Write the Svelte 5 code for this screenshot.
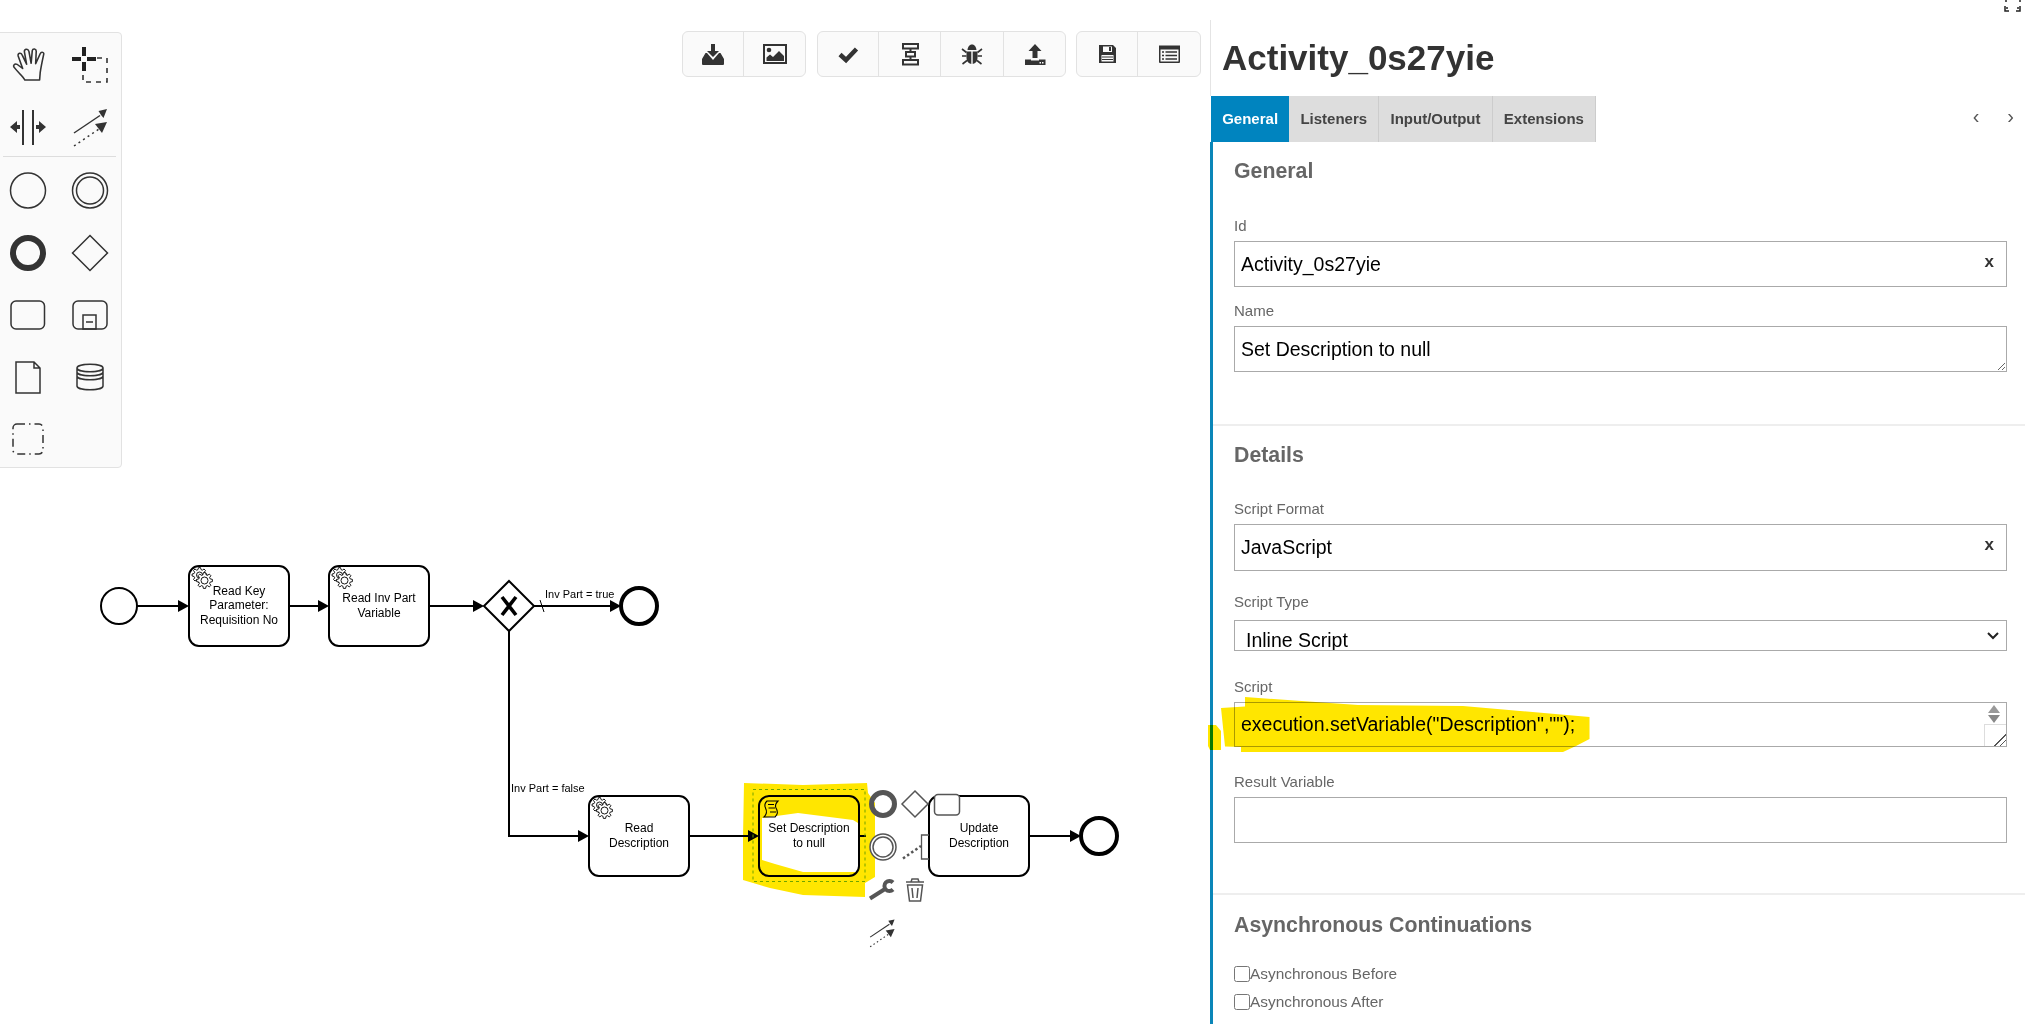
<script>
  const tasks = [
    { x: 189, lines: [['Read Key', 590.5], ['Parameter:', 605], ['Requisition No', 619.5]] },
    { x: 329, lines: [['Read Inv Part', 597.5], ['Variable', 612.5]] }
  ];
  function gear(cx, cy, r, n = 8) {
    const pts = [];
    for (let i = 0; i < n; i++) {
      const a = (i / n) * Math.PI * 2;
      const w = (Math.PI / n) * 0.5;
      [[r * 0.74, -w * 1.35], [r, -w * 0.7], [r, w * 0.7], [r * 0.74, w * 1.35]].forEach(([rad, d]) => {
        pts.push(`${(cx + rad * Math.cos(a + d)).toFixed(1)} ${(cy + rad * Math.sin(a + d)).toFixed(1)}`);
      });
    }
    return 'M' + pts.join('L') + 'Z';
  }
  const flows = [
    'M137 606H180', 'M289 606H320', 'M429 606H475', 'M534 606H622',
    'M509 631V836H580', 'M689 836H750', 'M1029 836H1072'
  ];
  const heads = [[189, 606], [329, 606], [484, 606], [621, 606], [589, 836], [759, 836], [1081, 836]];
</script>

{#snippet connectIcon()}
  <path class="ink" d="M-16 11 L11 -7 L8.5 -11 L17 -13 L13.5 -4 L11 -7Z" />
  <path class="thinline" d="M-16 11 L10 -6.5" />
  <path class="dotline" d="M-16 24 L9 7" />
  <path class="ink" d="M5 2 L17 0 L12 11Z" />
{/snippet}

{#snippet gears(x, y)}
  <path class="gear" d={gear(x + 10, y + 10, 7.5)} />
  <circle class="gearhole" cx={x + 10} cy={y + 10} r="3" />
  <path class="gear" d={gear(x + 15, y + 15.5, 8)} />
  <circle class="gearhole" cx={x + 15} cy={y + 15.5} r="3.5" />
{/snippet}

<div class="page">
  <main class="canvas">
    <svg class="diagram" width="1210" height="1024" viewBox="0 0 1210 1024">
      <circle class="shape" cx="119" cy="606" r="18" />
      {#each tasks as t}
        <rect class="shape" x={t.x} y="566" width="100" height="80" rx="10" />
        {@render gears(t.x + 0.5, 565)}
        {#each t.lines as [txt, y]}
          <text class="tasktext" x={t.x + 50} y={y + 4}>{txt}</text>
        {/each}
      {/each}

      {#each flows as d}
        <path class="flow" {d} />
      {/each}
      {#each heads as [x, y]}
        <polygon class="head" points="{x - 11},{y - 6} {x},{y} {x - 11},{y + 6}" />
      {/each}
      <path class="thinline black" d="M540 600 L544 612" />

      <polygon class="shape" points="509,581 534,606 509,631 484,606" />
      <path class="xmark" d="M502 597 L516 615 M516 597 L502 615" />
      <circle class="shape end" cx="639" cy="606" r="18" />
      <text class="label" x="545" y="598">Inv Part = true</text>
      <text class="label" x="511" y="792">Inv Part = false</text>

      <rect class="shape" x="589" y="796" width="100" height="80" rx="10" />
      {@render gears(589 + 0.5, 795)}
      <text class="tasktext" x="639" y="832">Read</text>
      <text class="tasktext" x="639" y="847">Description</text>

      <rect class="shape" x="759" y="796" width="100" height="80" rx="10" />
      <path class="script" d="M767 801 H778 C775 804 775 806 776 808 C778 811 778 814 775 817 H764 C767 814 767 811 765.5 808 C764 805 765 803 767 801Z M768 804.5H774 M768.5 808H775 M770 812H776" />
      <text class="tasktext" x="809" y="832">Set Description</text>
      <text class="tasktext" x="809" y="847">to null</text>
      <path class="flow" d="M859 836H866" />
      <rect class="select" x="753" y="789.5" width="112" height="92" />

      <rect class="shape" x="929" y="796" width="100" height="80" rx="10" />
      <circle class="shape end" cx="1099" cy="836" r="18" />
      <text class="tasktext" x="979" y="832">Update</text>
      <text class="tasktext" x="979" y="847">Description</text>

      <path class="highlight" fill-rule="evenodd" d="M744 783 L803 785 L867 783 L868 793 L875 803 V877 L865 883 V897 L803 895 L770 888 L743 880 L743 837Z M762 818 L798 813 L853 820 L858 823 V872 H803 L775 864 L762 860Z" />

      <circle class="pad thick" cx="883" cy="804" r="11.5" />
      <polygon class="pad" points="915,791 928,804 915,817 902,804" />
      <rect class="pad" x="934.5" y="794.5" width="25" height="20.5" rx="3.5" />
      <circle class="pad" cx="883" cy="847" r="13" />
      <circle class="pad" cx="883" cy="847" r="10" />
      <path class="paddots" d="M903 858.5 L921 846" />
      <path class="padthin" d="M929 835H921.5V859H929" />
      <path class="wrench" d="M870 898.500 L885 889 M893 882.500 A 5 5 0 1 0 893 889.500" />
      <g class="trash">
        <path d="M906 882H924 M911 882L912 879H918L919 882" />
        <path d="M907.5 885L909.5 901H920.500L922.5 885Z" />
        <path d="M912 888L913 898 M918 888L917 898" />
      </g>
      <g class="connect-small" transform="translate(882 929) scale(0.74)">
        {@render connectIcon()}
      </g>
    </svg>

    <aside class="palette">
      <div class="tool"><svg viewBox="-31 -31 62 62"><path class="hand" transform="translate(-15.5 -16.500) scale(1.13 1.05)" d="M11 31 C9 27 5 24 1.5 19 C0 17 2 15 4 16 L9 20 L5 8 C4.5 5 7.5 4.5 8.5 7 L12.5 16 L10.5 4 C10.5 1 13.5 1 14.5 3.5 L16.5 15 L17.5 3 C18 0.5 21 1 21 3.5 L20.5 15.5 L24.5 6 C25.5 3.5 28.5 4.5 27.5 7 C26.5 12 25 20 24.5 24 L24 31 Z" /></svg></div>
      <div class="tool"><svg viewBox="-31 -31 62 62"><path class="cross" d="M-6 -17V-8 M-6 -2V7 M-18 -5H-9 M-3 -5H6" /><path class="dashrect" d="M7 -6H17V18H-7V7" /></svg></div>
      <div class="tool"><svg viewBox="-31 -32 62 62"><path class="thick2" d="M-5 -17V18 M5 -17V18" /><polygon class="ink" points="-18,0 -11,-6 -11,-2 -8,-2 -8,2 -11,2 -11,6" /><polygon class="ink" points="18,0 11,-6 11,-2 8,-2 8,2 11,2 11,6" /></svg></div>
      <div class="tool"><svg viewBox="-31 -32 62 62"><g transform="translate(0 -5)">{@render connectIcon()}</g></svg></div>
      <div class="sep"></div>
      <div class="tool"><svg viewBox="-31 -30.500 62 62"><circle class="pal" r="17.5" /></svg></div>
      <div class="tool"><svg viewBox="-31 -30.500 62 62"><circle class="pal" r="17.5" /><circle class="pal" r="13.5" /></svg></div>
      <div class="tool"><svg viewBox="-31 -31 62 62"><circle class="pal heavy" r="15" /></svg></div>
      <div class="tool"><svg viewBox="-31 -31 62 62"><polygon class="pal" points="0,-17.5 17.5,0 0,17.5 -17.5,0" /></svg></div>
      <div class="tool"><svg viewBox="-31 -31 62 62"><rect class="pal" x="-17" y="-14" width="33.5" height="28" rx="5" /></svg></div>
      <div class="tool"><svg viewBox="-31 -31 62 62"><rect class="pal" x="-17" y="-14" width="34" height="28" rx="5" /><rect class="pal" x="-7" y="0" width="13" height="14" /><path class="pal" d="M-4 7H3" /></svg></div>
      <div class="tool"><svg viewBox="-31 -31 62 62"><path class="pal" d="M-12 -15 H6 L12 -9 V16 H-12Z M6 -15V-9H12" /></svg></div>
      <div class="tool"><svg viewBox="-31 -31 62 62"><path class="pal" d="M-13 -9 C-13 -14 13 -14 13 -9 V9 C13 14 -13 14 -13 9Z M-13 -9 C-13 -4 13 -4 13 -9 M-13 -5 C-13 0 13 0 13 -5 M-13 -1 C-13 4 13 4 13 -1" /></svg></div>
      <div class="tool"><svg viewBox="-31 -31 62 62"><rect class="pal dashed" x="-15" y="-15" width="30" height="30" rx="4" /></svg></div>
    </aside>

    <nav class="toolbar">
      <div class="group">
        <button aria-label="Download"><svg width="24" height="24" viewBox="0 0 24 24"><path class="fill" d="M10 2h4v7h4l-6 6-6-6h4z" /><path class="fill" d="M4.5 11H6l6 7 6-7h1.5L23 17v5a1 1 0 0 1-1 1H2a1 1 0 0 1-1-1v-5z" /></svg></button>
        <button aria-label="Image"><svg width="26" height="24" viewBox="0 0 26 24"><rect class="outline" x="2" y="3" width="22" height="18" /><circle class="fill" cx="7" cy="8" r="2.3" /><path class="fill" d="M4.5 19V15.5L8 12.5 11 15 17 9 22 14V19Z" /></svg></button>
      </div>
      <div class="group">
        <button class="w61" aria-label="Validate"><svg width="24" height="24" viewBox="0 0 24 24"><path class="checkmark" d="M4 12.5 L10 18 L20.5 7" /></svg></button>
        <button class="w62" aria-label="Layout"><svg width="24" height="24" viewBox="0 0 24 24"><path class="outline" d="M5 2H20V6.5H5Z M8 10H17V14.5H8Z M5 18H20V22.5H5Z M12.5 6.5V10 M12.5 14.5V18" /></svg></button>
        <button class="w63" aria-label="Debug"><svg width="24" height="24" viewBox="0 0 24 24"><path class="fill" d="M7.5 8C8 4 10 2.5 12 2.5S16 4 16.5 8Z M6.5 9.5H11.3V22C8.3 21.5 6.5 19 6.5 16Z M12.7 9.5H17.5V16C17.5 19 15.7 21.5 12.7 22Z" /><path class="bugleg" d="M2 7 L6.5 10.5 M22 7 L17.5 10.5 M2 14H6.5 M22 14H17.5 M2.5 22 L7 18.5 M21.5 22 L17 18.5" /></svg></button>
        <button class="w61" aria-label="Deploy"><svg width="24" height="24" viewBox="0 0 24 24"><path class="fill" d="M12 2 L18.5 9 H14.5 V16 H9.5 V9 H5.5Z" /><path class="fill" d="M2 17.5H8V18.5H16V17.5H22.5V23H2Z" /><rect x="16.5" y="20" width="1.5" height="1.5" fill="#fafafa" /><rect x="19" y="20" width="1.5" height="1.5" fill="#fafafa" /></svg></button>
      </div>
      <div class="group">
        <button aria-label="Save"><svg width="24" height="24" viewBox="0 0 24 24"><path class="fill" fill-rule="evenodd" d="M4 3H18L21 6V21H4Z M8 4.5V10H17V4.5Z M6.5 13V19.5H18.5V13Z" /><rect class="fill" x="14" y="5" width="2" height="4" /><path class="stripe" d="M7 15H18 M7 17.5H18" /></svg></button>
        <button class="w62" aria-label="Properties"><svg width="24" height="24" viewBox="0 0 24 24"><path class="fill" fill-rule="evenodd" d="M2 3.5H23V20A1 1 0 0 1 22 21H3A1 1 0 0 1 2 20Z M3.5 7.5V19.5H21.5V7.5Z" /><path class="lines" d="M5 10H7 M8.5 10H20 M5 13.5H7 M8.5 13.5H20 M5 17H7 M8.5 17H20" /></svg></button>
      </div>
    </nav>
  </main>

  <section class="panel">
    <svg class="corner" width="22" height="14" viewBox="0 0 22 14"><path d="M3 6V11H7 M5 7V9 M18 6V11H14 M16 7V9 M4 0V2 M18 0V2" /></svg>
    <header class="head-bar"><h1>Activity_0s27yie</h1></header>
    <div class="tabrow">
      <ul class="tabs">
        <li class="active">General</li>
        <li>Listeners</li>
        <li>Input/Output</li>
        <li>Extensions</li>
      </ul>
      <div class="tabnav"><span>‹</span><span>›</span></div>
    </div>

    <div class="content">
      <section class="group-sec one">
        <h2>General</h2>
        <div class="field firstone">
          <span class="lbl">Id</span>
          <div class="wrap"><input value="Activity_0s27yie" readonly /><b class="clear">x</b></div>
        </div>
        <div class="field g14">
          <span class="lbl">Name</span>
          <textarea class="multi" readonly>Set Description to null</textarea>
        </div>
      </section>

      <section class="group-sec two">
        <h2>Details</h2>
        <div class="field first">
          <span class="lbl">Script Format</span>
          <div class="wrap"><input class="tall" value="JavaScript" readonly /><b class="clear">x</b></div>
        </div>
        <div class="field g21">
          <span class="lbl sl">Script Type</span>
          <div class="fake-select"><span>Inline Script</span><svg width="14" height="10" viewBox="0 0 14 10"><path d="M2 2 L7 7 L12 2" /></svg></div>
        </div>
        <div class="field g26">
          <span class="lbl">Script</span>
          <div class="wrap script-wrap">
            <textarea class="multi short" readonly>execution.setVariable("Description","");</textarea>
            <div class="spin"><i class="up"></i><i class="down"></i></div>
            <div class="resizer"></div>
          </div>
        </div>
        <div class="field g25">
          <span class="lbl">Result Variable</span>
          <input value="" readonly />
        </div>
      </section>

      <section class="group-sec three">
        <h2>Asynchronous Continuations</h2>
        <label class="check"><input type="checkbox" />Asynchronous Before</label>
        <label class="check"><input type="checkbox" />Asynchronous After</label>
      </section>
    </div>
    <svg class="marker" width="400" height="70" viewBox="0 0 400 70">
      <path d="M37 1 L150 9 L255 10 L381.500 21 V43 L368 50 L355 56 H33 V51 L17 50.500 L13 12 L37 10.500Z" />
      <path d="M0 29 H8 L13 35 V54 H2 L0 50Z" />
    </svg>
  </section>
</div>

<style>
  :global(body) {
    margin: 0;
    background: #fff;
    overflow: hidden;
    font-family: "Liberation Sans", Arial, sans-serif;
  }
  .page {
    display: flex;
    width: 2025px;
    height: 1024px;
    overflow: hidden;
    background: #fff;
  }
  .canvas {
    position: relative;
    flex: 0 0 1210px;
    height: 1024px;
  }
  .diagram { position: absolute; left: 0; top: 0; }

  .shape { fill: #fff; stroke: #000; stroke-width: 2; }
  .shape.end { stroke-width: 4; }
  .flow { fill: none; stroke: #000; stroke-width: 2; }
  .head { fill: #000; }
  .xmark { fill: none; stroke: #000; stroke-width: 3.6; }
  .tasktext { font: 12px "Liberation Sans", Arial, sans-serif; text-anchor: middle; fill: #000; }
  .label { font: 11px "Liberation Sans", Arial, sans-serif; fill: #000; }
  .gear { fill: #fff; stroke: #000; stroke-width: 0.9; }
  .gearhole { fill: #fff; stroke: #000; stroke-width: 0.9; }
  .script { fill: none; stroke: #000; stroke-width: 1.1; }
  .select { fill: none; stroke: #6fb52c; stroke-width: 1; stroke-dasharray: 3 3; }
  .highlight { fill: #ffe600; mix-blend-mode: multiply; }
  .pad { fill: #fff; stroke: #555; stroke-width: 1.5; }
  .pad.thick { stroke-width: 5; fill: none; }
  .paddots { fill: none; stroke: #555; stroke-width: 2.5; stroke-dasharray: 2.5 2.5; }
  .padthin { fill: none; stroke: #555; stroke-width: 1.3; }
  .wrench { fill: none; stroke: #555; stroke-width: 4; }
  .trash path { fill: none; stroke: #555; stroke-width: 1.5; }

  .palette {
    position: absolute;
    left: -4px;
    top: 32px;
    width: 126px;
    height: 436px;
    box-sizing: border-box;
    display: grid;
    grid-template-columns: 62px 62px;
    grid-template-rows: 62px 62px 3px;
    grid-auto-rows: 62px;
    align-content: start;
    background: #fafafa;
    border: 1px solid #e2e2e2;
    border-radius: 4px;
  }
  .tool svg { width: 62px; height: 62px; display: block; }
  .sep {
    grid-column: 1 / 3;
    height: 1px;
    margin: -1px 5px 0 6px;
    background: #ddd;
    align-self: start;
  }
  .ink { fill: #333; stroke: none; }
  .thinline { fill: none; stroke: #333; stroke-width: 1.5; }
  .thinline.black { stroke: #000; stroke-width: 1; }
  .dotline { fill: none; stroke: #333; stroke-width: 1.5; stroke-dasharray: 2 3.5; }
  .hand { fill: none; stroke: #333; stroke-width: 1.4; stroke-linejoin: round; }
  .cross { fill: none; stroke: #222; stroke-width: 4; }
  .dashrect { fill: none; stroke: #333; stroke-width: 1.6; stroke-dasharray: 5 5; }
  .thick2 { fill: none; stroke: #333; stroke-width: 2; }
  .pal { fill: none; stroke: #333; stroke-width: 1.5; }
  .pal.heavy { stroke-width: 6; }
  .pal.dashed { stroke-dasharray: 8 4 1.5 4; }

  .toolbar {
    position: absolute;
    top: 31px;
    left: 682px;
    display: flex;
    gap: 11px;
  }
  .group {
    display: flex;
    height: 46px;
    box-sizing: border-box;
    border: 1px solid #e2e2e2;
    border-radius: 6px;
    background: #fafafa;
    overflow: hidden;
  }
  .group:last-child { margin-left: -1px; }
  .group button {
    width: 61px;
    padding: 0;
    border: 0;
    border-right: 1px solid #e2e2e2;
    background: transparent;
    display: flex;
    align-items: center;
    justify-content: center;
  }
  .group button:last-child { border-right: 0; }
  .group button.w61 { width: 61px; }
  .group button.w62 { width: 62px; }
  .group button.w63 { width: 63px; }
  .fill { fill: #333; }
  .outline { fill: none; stroke: #333; stroke-width: 2; }
  .checkmark { fill: none; stroke: #333; stroke-width: 4.5; }
  .bugleg { fill: none; stroke: #333; stroke-width: 1.6; }
  .stripe { fill: none; stroke: #333; stroke-width: 1.2; }
  .lines { fill: none; stroke: #333; stroke-width: 1.5; }

  .panel {
    position: relative;
    flex: 1;
    min-width: 0;
    color: #666;
    font-size: 15px;
  }
  .corner { position: absolute; right: 1px; top: 0; }
  .corner path { fill: none; stroke: #222; stroke-width: 1.5; }
  .head-bar {
    height: 76px;
    margin-top: 20px;
    box-sizing: border-box;
    border-left: 1px solid #e4e4e4;
    padding: 17px 0 0 11px;
  }
  h1 {
    margin: 0;
    font-size: 35px;
    line-height: 41px;
    font-weight: 700;
    color: #333;
  }
  .tabrow {
    display: flex;
    justify-content: space-between;
    height: 46px;
  }
  .tabs {
    display: flex;
    list-style: none;
    margin: 0 0 0 1px;
    padding: 0;
    font-size: 15px;
    font-weight: 700;
    color: #444;
  }
  .tabs li {
    padding: 0 11.2px;
    line-height: 46px;
    background: #ddd;
    border-right: 1px solid #ccc;
  }
  .tabs li.active { background: #0084bf; color: #fff; border-right: 0; }
  .tabnav {
    display: flex;
    gap: 28px;
    padding: 8px 11px 0 0;
    font-size: 20px;
    line-height: 24px;
    color: #555;
  }
  .content {
    border-left: 3px solid #0a86b8;
    margin-left: 0;
    height: 882px;
  }
  .group-sec { padding: 0 18px 0 21px; }
  .group-sec.one { padding-top: 12px; border-bottom: 2px solid #eee; height: 284px; box-sizing: border-box; }
  .group-sec.two { padding-top: 12px; height: 469px; box-sizing: border-box; border-bottom: 2px solid #eee; }
  .group-sec.three { padding-top: 13px; }
  h2 {
    margin: 0;
    font-size: 21.3px;
    line-height: 34px;
    font-weight: 700;
    color: #666;
  }
  .field.firstone { margin-top: 28px; }
  .field.first { margin-top: 27px; }
  .field.g14 { margin-top: 14px; }
  .field.g21 { margin-top: 21px; }
  .field.g25 { margin-top: 25px; }
  .field.g26 { margin-top: 26px; }
  .lbl {
    display: block;
    font-size: 15px;
    line-height: 20px;
    margin-bottom: 5px;
    color: #666;
  }
  .lbl.sl { margin-bottom: 8px; }
  .wrap { position: relative; }
  input:not([type]), textarea, .fake-select {
    display: block;
    box-sizing: border-box;
    width: 100%;
    height: 46px;
    margin: 0;
    padding: 0 6px;
    border: 1px solid #aaa;
    background: #fff;
    color: #000;
    font: 19.5px "Liberation Sans", Arial, sans-serif;
    outline: none;
  }
  input.tall { height: 47px !important; }
  textarea.multi { padding: 11px 6px 0; resize: vertical; height: 46px; overflow: hidden; line-height: 23px; }
  textarea.multi.short { height: 45px; padding-top: 10px; resize: none; }
  .clear {
    position: absolute;
    right: 13px;
    top: 10px;
    font-size: 17px;
    color: #333;
    line-height: 22px;
  }
  .fake-select {
    display: flex;
    height: 31px;
    align-items: flex-end;
    justify-content: space-between;
    padding: 0 6px 0 11px;
    overflow: hidden;
  }
  .fake-select span { line-height: 20px; height: 20px; }
  .fake-select svg { align-self: center; }
  .fake-select path { fill: none; stroke: #222; stroke-width: 2; }
  .spin {
    position: absolute;
    right: 7px;
    top: 3px;
    width: 12px;
  }
  .spin i { display: block; width: 0; height: 0; margin-bottom: 2px; border-left: 6px solid transparent; border-right: 6px solid transparent; }
  .spin .up { border-bottom: 8px solid #999; }
  .spin .down { border-top: 8px solid #888; }
  .resizer {
    position: absolute;
    right: 1px;
    bottom: 1px;
    width: 22px;
    height: 22px;
    box-sizing: border-box;
    border-left: 1px solid #ddd;
    border-top: 1px solid #ddd;
    background: linear-gradient(135deg, #fff 0 70%, #555 70% 74%, #fff 74% 84%, #555 84% 88%, #fff 88%);
  }
  .check {
    display: flex;
    align-items: center;
    height: 28px;
    font-size: 15.4px;
    color: #666;
  }
  .check input { width: 16px; height: 16px; margin: 0; }
  .group-sec.three h2 + .check { margin-top: 18px; }
  .marker {
    position: absolute;
    left: -2px;
    top: 696px;
    mix-blend-mode: multiply;
    pointer-events: none;
  }
  .marker path { fill: #ffe600; }
</style>
